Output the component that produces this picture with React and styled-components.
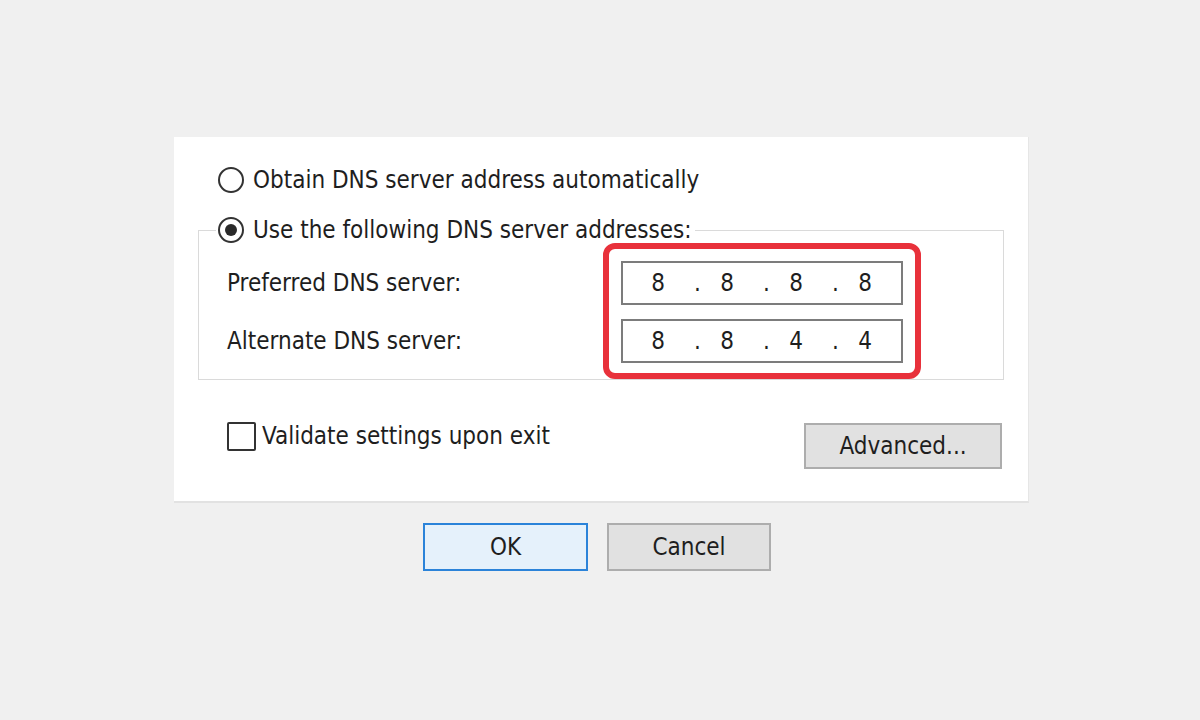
import React from 'react';
import styled, { createGlobalStyle } from 'styled-components';

const GlobalStyle = createGlobalStyle`
	html, body {
		margin: 0;
		padding: 0;
		background: #f0f0f0;
	}
	body {
		font-family: "DejaVu Sans Condensed", "DejaVu Sans", sans-serif;
		font-stretch: condensed;
		font-size: 24px;
		color: #1e1e1e;
	}
`;

const Page = styled.div`
	width: 1200px;
	height: 720px;
	padding-top: 137px;
	box-sizing: border-box;
`;

const Panel = styled.div`
	width: 855px;
	height: 366px;
	margin-left: 174px;
	box-sizing: border-box;
	background: #ffffff;
	border-right: 1px solid #e6e6e6;
	border-bottom: 2px solid #e2e2e2;
	padding: 28px 24px 0 24px;
`;

const OptionRow = styled.label`
	display: flex;
	align-items: center;
	gap: ${ ( p ) => p.gap || 9 }px;
	height: 30px;
	margin-left: ${ ( p ) => p.indent || 0 }px;
	white-space: nowrap;
`;

const Radio = styled.span`
	width: 26px;
	height: 26px;
	box-sizing: border-box;
	border: 2px solid #333;
	border-radius: 50%;
	display: flex;
	align-items: center;
	justify-content: center;
	flex-shrink: 0;

	&::after {
		content: "";
		width: 12px;
		height: 12px;
		border-radius: 50%;
		background: ${ ( p ) => p.checked ? "#2a2a2a" : "transparent" };
	}
`;

const Checkbox = styled.span`
	width: 29px;
	height: 29px;
	box-sizing: border-box;
	border: 2px solid #333;
	border-radius: 2px;
	flex-shrink: 0;
`;

const Group = styled.fieldset`
	margin: 20px 0 0 0;
	padding: 16px 0 16px 0;
	border: 1px solid #dadada;

	legend {
		margin-left: 17px;
		padding: 0 3px 0 2px;
		height: 30px;
	}
`;

const Fields = styled.div`
	position: relative;
	padding-left: 28px;

	/* red annotation drawn over the two address boxes */
	&::after {
		content: "";
		position: absolute;
		left: 404px;
		top: -18px;
		width: 318px;
		height: 136px;
		box-sizing: border-box;
		border: 6px solid #e8313b;
		border-radius: 12px;
		pointer-events: none;
	}
`;

const FieldRow = styled.div`
	display: grid;
	grid-template-columns: 394px 282px;
	align-items: center;
	height: 44px;

	& + & {
		margin-top: 14px;
	}
`;

const IpBox = styled.div`
	display: flex;
	align-items: center;
	height: 44px;
	box-sizing: border-box;
	border: 2px solid #7c7c7c;
	padding-left: 7px;
	background: #fff;
`;

const Octet = styled.span`
	width: 56px;
	text-align: center;
`;

const Dot = styled.span`
	width: 13px;
	box-sizing: border-box;
	padding-left: 8px;
`;

const Footer = styled.div`
	display: flex;
	justify-content: space-between;
	align-items: flex-start;
	margin-top: 41px;
	padding: 0 2px 0 29px;
`;

const Button = styled.button`
	font: inherit;
	color: #1e1e1e;
	width: ${ ( p ) => p.w }px;
	height: ${ ( p ) => p.h || 48 }px;
	margin-top: ${ ( p ) => p.top || 0 }px;
	box-sizing: border-box;
	border: 2px solid ${ ( p ) => p.primary ? "#2b83d9" : "#adadad" };
	background: ${ ( p ) => p.primary ? "#e5f1fb" : "#e1e1e1" };
	padding: 0;
	border-radius: 0;
`;

const ButtonRow = styled.div`
	display: flex;
	gap: 19px;
	margin: 20px 0 0 423px;
`;

const IpField = ( { value } ) => {
	const parts = value.split( "." );
	return (
		<IpBox>
			{ parts.map( ( n, i ) => (
				<React.Fragment key={ i }>
					{ i > 0 && <Dot>.</Dot> }
					<Octet>{ n }</Octet>
				</React.Fragment>
			) ) }
		</IpBox>
	);
};

export default function App () {
	return (
		<>
			<GlobalStyle />
			<Page>
				<Panel>
					<OptionRow indent={ 20 }>
						<Radio />
						Obtain DNS server address automatically
					</OptionRow>

					<Group>
						<legend>
							<OptionRow>
								<Radio checked />
								Use the following DNS server addresses:
							</OptionRow>
						</legend>
						<Fields>
							<FieldRow>
								<span>Preferred DNS server:</span>
								<IpField value="8.8.8.8" />
							</FieldRow>
							<FieldRow>
								<span>Alternate DNS server:</span>
								<IpField value="8.8.4.4" />
							</FieldRow>
						</Fields>
					</Group>

					<Footer>
						<OptionRow gap={ 6 }>
							<Checkbox />
							Validate settings upon exit
						</OptionRow>
						<Button w={ 198 } h={ 46 } top={ 2 }>Advanced...</Button>
					</Footer>
				</Panel>

				<ButtonRow>
					<Button w={ 165 } primary>OK</Button>
					<Button w={ 164 }>Cancel</Button>
				</ButtonRow>
			</Page>
		</>
	);
}
